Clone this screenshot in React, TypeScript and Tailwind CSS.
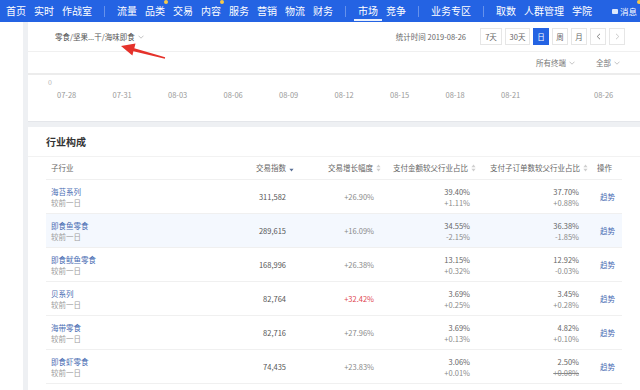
import React from "react";

const groups: string[][] = [
  ["首页", "实时", "作战室"],
  ["流量", "品类", "交易", "内容", "服务", "营销", "物流", "财务"],
  ["市场", "竞争"],
  ["业务专区"],
  ["取数", "人群管理", "学院"],
];

const rows = [
  ["海苔系列", "311,582", "+26.90%", "39.40%", "+1.11%", "37.70%", "+0.88%"],
  ["即食鱼零食", "289,615", "+16.09%", "34.55%", "-2.15%", "36.38%", "-1.85%"],
  ["即食鱿鱼零食", "168,996", "+26.38%", "13.15%", "+0.32%", "12.92%", "-0.03%"],
  ["贝系列", "82,764", "+32.42%", "3.69%", "+0.25%", "3.45%", "+0.28%"],
  ["海带零食", "82,716", "+27.96%", "3.69%", "+0.13%", "4.82%", "+0.10%"],
  ["即食虾零食", "74,435", "+23.83%", "3.06%", "+0.01%", "2.50%", "+0.08%"],
];

const labels = ["07-28", "07-31", "08-03", "08-06", "08-09", "08-12", "08-15", "08-18", "08-21"];

function Sort({ active }: { active?: boolean }) {
  return (
    <svg width="5" height="8" viewBox="0 0 5 8" className="ml-[3px] shrink-0">
      {!active && <path d="M2.5 0.6 L4.6 3.2 L0.4 3.2Z" fill="#cfcfcf" />}
      <path d="M0.4 4.8 L4.6 4.8 L2.5 7.4Z" fill={active ? "#5a6f96" : "#cfcfcf"} />
    </svg>
  );
}

function Chevron() {
  return (
    <svg width="6" height="4" viewBox="0 0 6 4" className="ml-[3px]">
      <path d="M0.5 0.7 L3 3.2 L5.5 0.7" fill="none" stroke="#b5b5b5" strokeWidth="0.8" />
    </svg>
  );
}

export default function App() {
  return (
    <div
      className="relative w-[640px] h-[390px] overflow-hidden bg-white"
      style={{ fontFamily: '"Noto Sans CJK SC", "Noto Sans", sans-serif' }}
    >
      {/* top nav */}
      <nav className="h-[22px] bg-[#2463e3] flex items-center pl-[6px] text-white text-[10px] font-normal leading-none whitespace-nowrap">
        {groups.map((g, gi) => (
          <React.Fragment key={gi}>
            {gi > 0 && <span className="w-px h-[11px] bg-white/30 mx-[12px]" />}
            <div className="flex items-center gap-[8px]">
              {g.map((t) => (
                <span key={t} className="relative">
                  {t}
                  {(t === "品类" || t === "内容") && (
                    <span className="absolute -top-[6px] -right-[3px] w-[4px] h-[4px] rounded-full bg-[#f7c948]" />
                  )}
                  {t === "市场" && (
                    <span className="absolute left-[-4px] right-[-4px] top-[13px] h-[2px] bg-white/90" />
                  )}
                </span>
              ))}
            </div>
          </React.Fragment>
        ))}
        <div className="ml-[20px] flex items-center text-[8.5px] font-normal relative">
          <span className="w-[6px] h-[5px] rounded-[1px] bg-white/85 mr-[2px]" />
          消息
          <span className="absolute -top-[7px] right-[-4px] w-[4px] h-[4px] rounded-full bg-[#f7c948]" />
        </div>
      </nav>

      <div className="flex h-[368px]">
        <aside className="w-[25px] bg-white" />
        <main className="flex-1 bg-[#eef0f3] pl-[5px] flex flex-col gap-[5px]">
          {/* card 1 */}
          <section className="bg-white h-[100px] shrink-0 border-b border-[#e4e6ea]">
            <div className="h-[30px] flex items-center border-b border-[#f0f0f0] pl-[27px] pr-[15px]">
              <span className="flex items-center text-[7.5px] text-[#555]">
                零食/坚果...干/海味即食
                <Chevron />
              </span>
              <span className="ml-auto text-[7.5px] text-[#666]">统计时间 2019-08-26</span>
              <div className="ml-[14px] flex gap-[3px] text-[7.5px] text-[#666]">
                <span className="w-[22px] h-[17px] border border-[#e6e6e6] flex items-center justify-center">7天</span>
                <span className="w-[25px] h-[17px] border border-[#e6e6e6] flex items-center justify-center">30天</span>
                <span className="w-[16px] h-[17px] bg-[#2463e3] text-white flex items-center justify-center">日</span>
                <span className="w-[16px] h-[17px] border border-[#e6e6e6] flex items-center justify-center">周</span>
                <span className="w-[16px] h-[17px] border border-[#e6e6e6] flex items-center justify-center">月</span>
                <span className="w-[16px] h-[17px] border border-[#e6e6e6] flex items-center justify-center">
                  <svg width="5" height="7" viewBox="0 0 5 7">
                    <path d="M4 0.8 L1.2 3.5 L4 6.2" fill="none" stroke="#777" strokeWidth="0.9" />
                  </svg>
                </span>
                <span className="w-[16px] h-[17px] border border-[#e6e6e6] flex items-center justify-center">
                  <svg width="5" height="7" viewBox="0 0 5 7">
                    <path d="M1 0.8 L3.8 3.5 L1 6.2" fill="none" stroke="#c4c4c4" strokeWidth="0.9" />
                  </svg>
                </span>
              </div>
            </div>
            <div className="h-[23px] flex items-center justify-end pr-[20px] gap-[21px] text-[7.5px] text-[#777] border-b-2 border-[#ececec]">
              <span className="flex items-center">
                所有终端
                <Chevron />
              </span>
              <span className="flex items-center">
                全部
                <Chevron />
              </span>
            </div>
            <div className="pl-[20px] pt-[2px] text-[7px] leading-[10px] text-[#b5b5b5]">0</div>
            <div className="pl-[29px] mt-[3px] flex text-[7.5px] leading-[10px] text-[#999]">
              {labels.map((l) => (
                <span key={l} className="w-[55.5px] shrink-0">
                  {l}
                </span>
              ))}
              <span className="ml-[37.5px]">08-26</span>
            </div>
          </section>

          {/* card 2 */}
          <section className="bg-white flex-1">
            <div className="h-[30px] flex items-center pl-[18px] border-b border-[#f2f2f2] text-[10px] font-bold text-[#333]">
              行业构成
            </div>
            <div className="mx-[18px] text-[7.5px]">
              <div className="grid grid-cols-[152px_100px_88px_94px_110px_32px] h-[23px] items-center border-b border-[#f0f0f0] text-[#666]">
                <span className="pl-[5px]">子行业</span>
                <span className="flex items-center justify-end pr-[4px]">
                  交易指数
                  <Sort active />
                </span>
                <span className="flex items-center justify-end pr-[5px]">
                  交易增长幅度
                  <Sort />
                </span>
                <span className="flex items-center justify-end pr-[4px]">
                  支付金额较父行业占比
                  <Sort />
                </span>
                <span className="flex items-center justify-end pr-[2px]">
                  支付子订单数较父行业占比
                  <Sort />
                </span>
                <span className="pl-[7px]">操作</span>
              </div>
              {rows.map((r, i) => (
                <div
                  key={r[0]}
                  className={`grid grid-cols-[152px_100px_88px_94px_110px_32px] h-[34px] items-center border-b border-[#f0f0f0] leading-[11px] ${
                    i === 1 ? "bg-[#f4f8fe]" : ""
                  }`}
                >
                  <div className="pl-[5px] flex flex-col">
                    <span className="text-[#4a6db3]">{r[0]}</span>
                    <span className="text-[#a0a0a0]">较前一日</span>
                  </div>
                  <span className="text-right pr-[12px] text-[#555]">{r[1]}</span>
                  <span className={`text-right pr-[12px] ${i === 3 ? "text-[#e0464f]" : "text-[#8a8a8a]"}`}>
                    {r[2]}
                  </span>
                  <div className="flex flex-col items-end pr-[10px]">
                    <span className="text-[#666]">{r[3]}</span>
                    <span className="text-[#8a8a8a]">{r[4]}</span>
                  </div>
                  <div className="flex flex-col items-end pr-[11px]">
                    <span className="text-[#666]">{r[5]}</span>
                    <span className={`text-[#8a8a8a] ${i === 5 ? "line-through" : ""}`}>{r[6]}</span>
                  </div>
                  <span className="pl-[10px] text-[#4a6db3]">趋势</span>
                </div>
              ))}
            </div>
          </section>
        </main>
      </div>

      {/* red annotation arrow */}
      <svg className="absolute left-0 top-0 pointer-events-none" width="640" height="390" viewBox="0 0 640 390">
        <polygon
          points="121,46 135.5,43.6 134.3,48.2 165.1,57.3 164.9,58.7 133.4,51.2 132.4,55.4"
          fill="#e5322b"
        />
      </svg>
    </div>
  );
}
